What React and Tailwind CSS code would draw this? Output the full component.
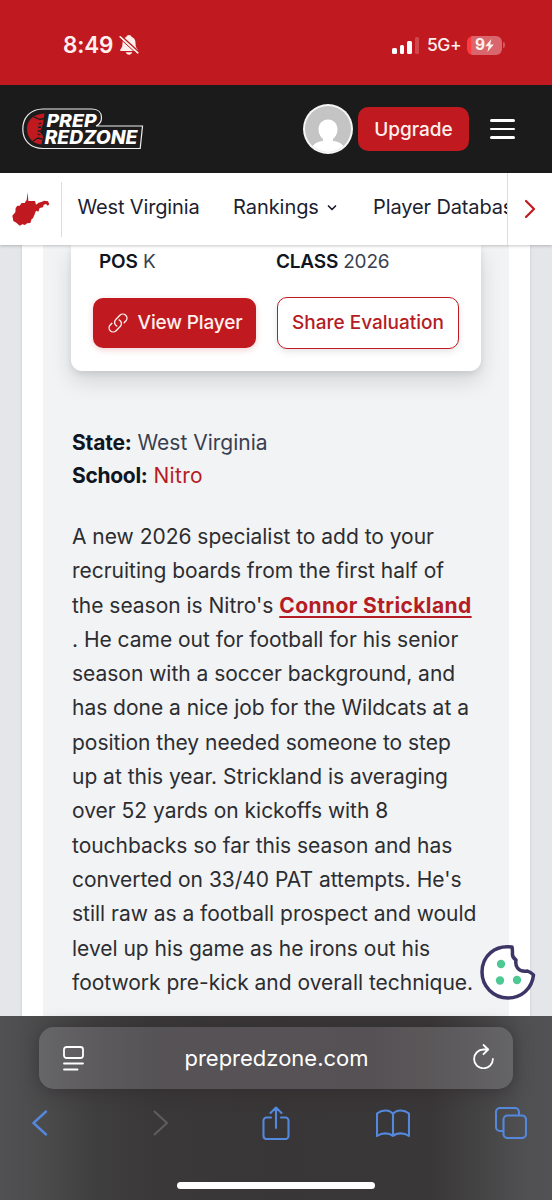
const paragraph = [
  { text: 'A new 2026 specialist to add to your' },
  { text: 'recruiting boards from the first half of' },
  { text: "the season is Nitro's ", link: 'Connor Strickland' },
  { text: '. He came out for football for his senior' },
  { text: 'season with a soccer background, and' },
  { text: 'has done a nice job for the Wildcats at a' },
  { text: 'position they needed someone to step' },
  { text: 'up at this year. Strickland is averaging' },
  { text: 'over 52 yards on kickoffs with 8' },
  { text: 'touchbacks so far this season and has' },
  { text: "converted on 33/40 PAT attempts. He's" },
  { text: 'still raw as a football prospect and would' },
  { text: 'level up his game as he irons out his' },
  { text: 'footwork pre-kick and overall technique.' },
]

const StatusBar = () => (
  <div className="h-[85px] shrink-0 bg-[#c01a20] flex items-start justify-between pl-[63px] pr-[47px] pt-[31px] text-[#fff0ee]">
    <div className="flex items-center h-7">
      <span className="text-[22.5px] font-semibold tracking-[-0.2px]">8:49</span>
      <svg className="w-5 h-[22px] ml-1.5" viewBox="0 0 20 22" fill="currentColor">
        <path d="M10 1c-1.300 0-2.200.8-2.500 1.800C5 3.700 3.500 6 3.500 9c0 3.800-.8 5-2 6.200-.7.700-.4 1.800.6 1.800h15.800c1 0 1.300-1.100.6-1.800-1.200-1.200-2-2.400-2-6.200 0-3-1.500-5.300-4-6.200C12.200 1.800 11.300 1 10 1z" />
        <path d="M6.800 18.300h6.400c-.4 1.500-1.600 2.500-3.200 2.500s-2.800-1-3.200-2.500z" />
        <path d="M1.800 1.600l18 16.500" stroke="#c01a20" strokeWidth="1.800" />
        <path d="M1.200 2.800l17.600 16" stroke="currentColor" strokeWidth="1.700" strokeLinecap="round" />
        <path d="M0 3.700l17.600 16" stroke="#c01a20" strokeWidth="1" />
      </svg>
    </div>
    <div className="flex items-center h-7">
      <div className="flex items-end gap-[3px] h-[17px]">
        <div className="w-[4.500px] h-[6px] rounded-[1.500px] bg-white" />
        <div className="w-[4.500px] h-[9px] rounded-[1.500px] bg-white" />
        <div className="w-[4.500px] h-[13px] rounded-[1.500px] bg-white" />
        <div className="w-[4.500px] h-[17px] rounded-[1.500px] bg-[#d0474c]" />
      </div>
      <span className="ml-2 w-8 text-[17.500px] font-medium tracking-[-0.500px] whitespace-nowrap">5G+</span>
      <div className="ml-2 w-[35px] h-[19px] rounded-[6px] bg-gradient-to-r from-[#ff3b3f] from-10% to-[#d9666c] to-15% flex items-center justify-center">
        <span className="text-[15.500px] font-bold">9</span>
        <svg className="w-[9px] h-[13px]" viewBox="0 0 8 12" fill="currentColor">
          <path d="M5.800 0L0 6.800h3.300L2 12l6-7H4.600z" />
        </svg>
      </div>
      <div className="ml-px w-[2px] h-[6px] rounded-r bg-[#d5565b]" />
    </div>
  </div>
)

const Logo = () => (
  <svg className="w-[122px] h-[43px]" viewBox="0 0 122 43">
    <path d="M21 1h49c6 0 9.500 3.500 9.500 8.500 0 4-2 7-5.500 8.500h46.500l-2.300 22.500H21C8 40.500.8 32 .8 21S8 1 21 1z" fill="#1c1c1c" stroke="#eee" strokeWidth="1.200" />
    <path d="M22.500 5.500C11 6 5 12.500 5 21s6 14.800 14.500 15.500L21 28l-3-4 3-8z" fill="#c01a20" />
    <path d="M12 9l6 2.500 4-1M11 33l5-3 4 1M19.500 15l-3 1M19 19l-3 .500M18.500 23h-3M18.500 27l-3-1" stroke="#1c1c1c" strokeWidth="1.300" fill="none" />
    <g fill="#fff" fontFamily="Inter, sans-serif" fontWeight="800" fontStyle="italic">
      <text x="24.500" y="18.500" fontSize="18" textLength="50" lengthAdjust="spacingAndGlyphs">PREP</text>
      <text x="22.500" y="36" fontSize="18.500" textLength="93" lengthAdjust="spacingAndGlyphs">REDZONE</text>
    </g>
  </svg>
)

const Header = () => (
  <header className="h-[88px] shrink-0 bg-[#1b1b1b] flex items-center pl-[22px] pr-[37px]">
    <Logo />
    <svg className="w-[50px] h-[50px] ml-auto" viewBox="0 0 50 50">
      <clipPath id="avatar">
        <circle cx="25" cy="25" r="23" />
      </clipPath>
      <circle cx="25" cy="25" r="25" fill="#f6f6f6" />
      <circle cx="25" cy="25" r="23" fill="#c4c4c4" />
      <g fill="#fff" clipPath="url(#avatar)">
        <path d="M25 15.500c5.500 0 9.500 4.200 9.500 10 0 4-2 7.500-4.500 9.500v2c6 .500 10 3 12 8v7H8v-7c2-5 6-7.500 12-8v-2c-2.500-2-4.500-5.500-4.500-9.500 0-5.800 4-10 9.500-10z" />
      </g>
    </svg>
    <button className="ml-[5px] w-[111px] h-11 pt-[2px] rounded-[10px] bg-[#c01a20] text-[#fff0ee] text-[19px] font-medium">
      Upgrade
    </button>
    <div className="ml-[21px] flex flex-col gap-[6px]">
      <div className="w-[25px] h-[2.500px] rounded bg-white" />
      <div className="w-[25px] h-[2.500px] rounded bg-white" />
      <div className="w-[25px] h-[2.500px] rounded bg-white" />
    </div>
  </header>
)

const Nav = () => (
  <nav className="relative z-10 h-[72px] shrink-0 bg-white flex items-center shadow-[0_1px_3px_rgba(0,0,0,0.22)] text-[20px] text-[#1c2130]">
    <svg className="w-[38px] h-[34px] ml-[11.500px] shrink-0" viewBox="35 65 114 102">
      <path
        d="M82 66L84 92 104 92 107 103 115 97 125 94 131 91 143 93 147 102 142 106 137 101 130 103 128 111 118 113 114 124 107 121 102 134 98 144 94 146 90 158 80 159 74 164 66 162 58 166 48 157 39 152 36 136 45 126 46 113 51 106 58 106 64 98 73 98 79 89z"
        fill="#c01a20"
      />
    </svg>
    <div className="ml-[11.500px] w-px h-[55px] shrink-0 bg-[#dcdde2]" />
    <div className="flex-1 flex items-center overflow-hidden whitespace-nowrap pb-1">
      <span className="ml-[15.500px] w-[123.500px] shrink-0 tracking-[-0.150px]">West Virginia</span>
      <span className="ml-8 w-[86px] shrink-0 tracking-[-0.050px]">Rankings</span>
      <svg className="w-2.5 h-2 ml-2 mt-0.5 shrink-0" viewBox="0 0 10 8" fill="none" stroke="currentColor" strokeWidth="1.700" strokeLinecap="round" strokeLinejoin="round">
        <path d="M1.500 2L5 5.500 8.500 2" />
      </svg>
      <span className="ml-9 shrink-0 tracking-[-0.120px]">Player Database</span>
    </div>
    <div className="w-[45px] h-full shrink-0 border-l border-[#dcdde2] flex items-center justify-center">
      <svg className="w-3 h-5" viewBox="0 0 12 20" fill="none" stroke="#c01a20" strokeWidth="2.200" strokeLinecap="round" strokeLinejoin="round">
        <path d="M2 2l8 8-8 8" />
      </svg>
    </div>
  </nav>
)

const PlayerCard = () => (
  <div className="h-[126px] -ml-px -mr-[2px] bg-white rounded-b-[11px] px-[22px] shadow-[0_10px_22px_rgba(0,0,0,0.13),0_3px_6px_rgba(0,0,0,0.08)]">
    <div className="flex pt-1 pl-[6px] text-[19px] leading-[25px] text-[#3a3f50]">
      <div className="w-[177px] tracking-[-0.150px]">
        <b className="text-[#101522] font-semibold">POS</b> K
      </div>
      <div className="tracking-[-0.200px]">
        <b className="text-[#101522] font-semibold">CLASS</b> 2026
      </div>
    </div>
    <div className="flex justify-between items-start mt-[23px] text-[19px] font-medium whitespace-nowrap">
      <button className="mt-px w-[163px] h-[50px] rounded-[10px] bg-[#c01a20] text-[#fff0ee] flex items-center justify-center shadow-[0_2px_6px_rgba(192,26,32,0.2)]">
        <svg className="w-[22px] h-[22px] mr-[9px]" viewBox="0 0 24 24" fill="none" stroke="currentColor" strokeWidth="1.500" strokeLinecap="round" strokeLinejoin="round">
          <path d="M13.190 8.688a4.500 4.500 0 0 1 1.242 7.244l-4.500 4.500a4.500 4.500 0 0 1-6.364-6.364l1.757-1.757m13.350-.622 1.757-1.757a4.500 4.500 0 0 0-6.364-6.364l-4.500 4.500a4.500 4.500 0 0 0 1.242 7.244" />
        </svg>
        <span className="tracking-[-0.150px]">View Player</span>
      </button>
      <button className="w-[182px] h-[52px] rounded-[10px] border-[1.500px] border-[#c01a20] text-[#b51c24] bg-white shadow-[0_3px_7px_rgba(0,0,0,0.1)]">
        Share Evaluation
      </button>
    </div>
  </div>
)

const Article = () => (
  <main className="h-[771px] shrink-0 bg-[#e5e6ea] px-[22px] overflow-hidden">
    <div className="h-full bg-white pl-[21px] pr-[21px] shadow-[0_0_3px_rgba(0,0,0,0.12)]">
      <div className="h-full bg-[#f2f3f5] pl-[29px] pr-[30px]">
        <PlayerCard />
        <div className="mt-[55px] text-[21px] leading-[33px] text-[#3a3f50]">
          <p>
            <b className="text-[#101522] font-bold tracking-[-0.200px]">State:</b> West Virginia
          </p>
          <p>
            <b className="text-[#101522] font-bold tracking-[-0.300px]">School:</b>{' '}
            <span className="text-[#b51c24] tracking-[0.300px]">Nitro</span>
          </p>
        </div>
        <p className="mt-7 text-[21px] leading-[34.300px] tracking-[-0.020px] text-[#2c2d31] whitespace-nowrap">
          {paragraph.map((line) => (
            <span key={line.text} className="block">
              {line.text}
              {line.link && (
                <a className="font-bold tracking-[0.400px] text-[#b51c24] underline decoration-2 underline-offset-[3px]">{line.link}</a>
              )}
            </span>
          ))}
        </p>
      </div>
    </div>
  </main>
)

const CookieButton = () => (
  <svg className="absolute left-[480px] top-[944px] w-14 h-14 z-10" viewBox="0 0 56 56">
    <path
      d="M32 3C15 .500 2 12 2 28c0 14 11 26 26 26 13 0 24-9 25.500-23-2-2-3.500-3-6-4-5 .800-8-.500-10-3-2-2.500-2-5-1.500-8-3-2-4-4-3.500-7 0-2 0-4-.500-6z"
      fill="#fff"
      stroke="#3e3567"
      strokeWidth="3.500"
      strokeLinejoin="round"
    />
    <circle cx="21" cy="20" r="4.200" fill="#4fc993" />
    <circle cx="20" cy="36.500" r="4.200" fill="#4fc993" />
    <circle cx="37" cy="36" r="4.200" fill="#4fc993" />
  </svg>
)

const BrowserBar = () => (
  <footer className="h-[184px] shrink-0 bg-linear-[90deg,#515153_0%,#4b4b4c_8%,#403f40_17%,#3a3839_28%,#393637_50%,#3a3738_78%,#454445_87%,#505052_95%,#525254_100%] flex flex-col">
    <div className="mt-[11px] ml-[39px] w-[474px] h-[62px] shrink-0 rounded-[15px] bg-linear-[90deg,#666567_0%,#5b595b_14%,#565356_25%,#565154_70%,#5d5b5d_88%,#656466_100%] shadow-[0_2px_18px_rgba(45,38,42,0.6)] flex items-center text-white">
      <svg className="ml-6 w-[21px] h-[25px]" viewBox="0 0 21 25" fill="none" stroke="currentColor" strokeWidth="1.800" strokeLinecap="round">
        <rect x="1" y="1" width="19" height="11" rx="2.500" />
        <path d="M1 17.500h19M1 23.500h13.500" />
      </svg>
      <span className="flex-1 text-center text-[22px] pr-1">prepredzone.com</span>
      <svg className="mr-[19px] mb-[3px] w-[21px] h-[25px]" viewBox="0 0 21 25" fill="none" stroke="currentColor" strokeWidth="1.800" strokeLinecap="round" strokeLinejoin="round">
        <path d="M15 5.500h-4.500a9.400 9.400 0 1 0 9.400 9.400M10.500 1l4.700 4.500-4.700 4.700" />
      </svg>
    </div>
    <div className="mt-4 h-9 flex items-center pl-8 text-[#5488dc]">
      <svg className="w-4 h-[26px]" viewBox="0 0 16 26" fill="none" stroke="currentColor" strokeWidth="2.400" strokeLinecap="round" strokeLinejoin="round">
        <path d="M14 1.500L1.500 13 14 24.500" />
      </svg>
      <svg className="w-4 h-[26px] ml-[105px] text-[#5f5e5e]" viewBox="0 0 16 26" fill="none" stroke="currentColor" strokeWidth="2" strokeLinecap="round" strokeLinejoin="round">
        <path d="M1.500 1.500L14 13 1.500 24.500" />
      </svg>
      <svg className="w-7 h-[34px] ml-[93px]" viewBox="0 0 28 34" fill="none" stroke="currentColor" strokeWidth="2.100" strokeLinecap="round" strokeLinejoin="round">
        <path d="M9 11.500H4.500a3 3 0 0 0-3 3V30a3 3 0 0 0 3 3h19a3 3 0 0 0 3-3V14.500a3 3 0 0 0-3-3H19M14 22V1.500M8.500 7L14 1.500 19.500 7" />
      </svg>
      <svg className="w-[34px] h-[29px] ml-[86px]" viewBox="0 0 34 29" fill="none" stroke="currentColor" strokeWidth="2.100" strokeLinecap="round" strokeLinejoin="round">
        <path d="M17 5C13.500.500 6 .500 1 4.500V27c5-3.500 12-3.500 16 0 4-3.500 11-3.500 16 0V4.500C28 .500 20.500.500 17 5zM17 5v22" />
      </svg>
      <svg className="w-8 h-8 ml-[84.500px]" viewBox="0 0 32 32" fill="none" stroke="currentColor" strokeWidth="2.100" strokeLinejoin="round">
        <path d="M8.500 24H5a4 4 0 0 1-4-4V5a4 4 0 0 1 4-4h15a4 4 0 0 1 4 4v3" />
        <rect x="8.500" y="8.500" width="22.500" height="22.500" rx="4" />
      </svg>
    </div>
    <div className="mt-auto mb-[11px] mx-auto w-[198px] h-[7px] rounded-full bg-white" />
  </footer>
)

const App = () => {
  return (
    <div className="relative w-[552px] h-[1200px] overflow-hidden flex flex-col font-[Inter,sans-serif]">
      <StatusBar />
      <Header />
      <Nav />
      <Article />
      <CookieButton />
      <BrowserBar />
    </div>
  )
}

export default App
